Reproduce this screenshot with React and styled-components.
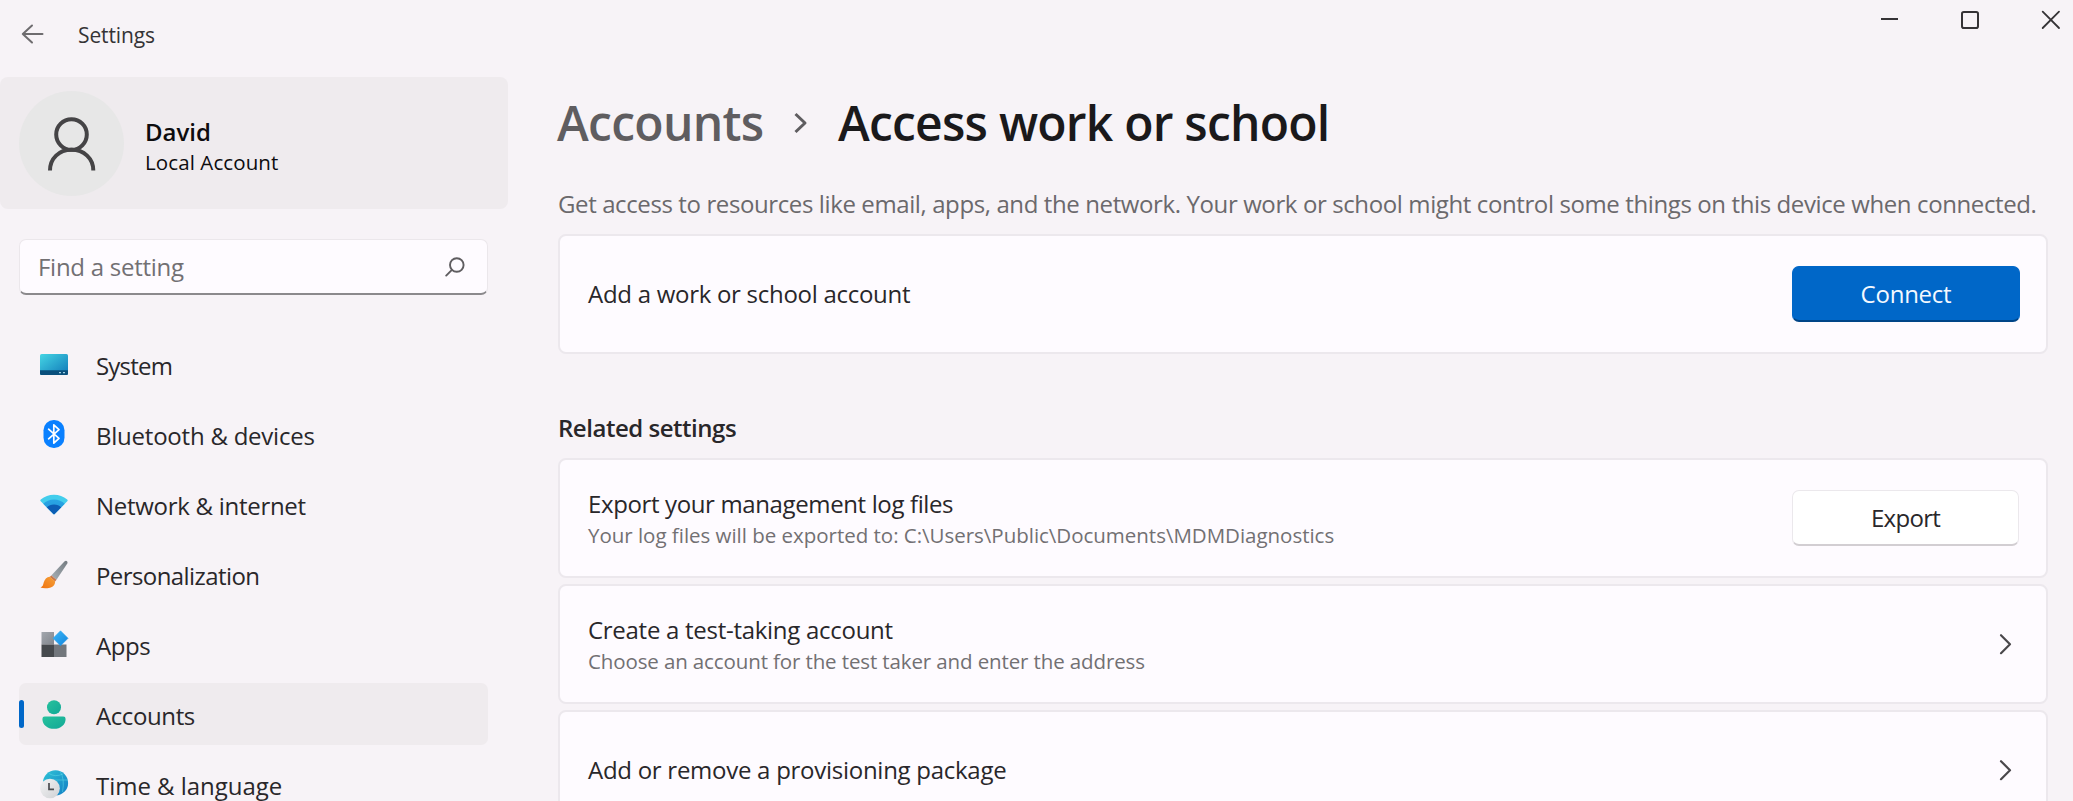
import React from "react";
import styled, { createGlobalStyle } from "styled-components";

const GlobalStyle = createGlobalStyle`
  *, *::before, *::after { box-sizing: border-box; }
  html, body { margin: 0; padding: 0; }
  body {
    background: #f7f3f7;
    color: #29272a;
    font-family: "Open Sans", "Noto Sans", sans-serif;
    font-size: 24px;
    line-height: 32px;
    overflow: hidden;
  }
  button, input { font: inherit; color: inherit; }
`;

const Window = styled.div`
  display: grid;
  grid-template-columns: 508px 1fr;
  height: 801px;
  overflow: hidden;
`;

const Label = styled.span`
  display: block;
  white-space: nowrap;
  letter-spacing: ${(p) => p.$track || 0}px;
`;

const Sidebar = styled.aside`
  display: flex;
  flex-direction: column;
`;

const TitleBar = styled.header`
  display: flex;
  align-items: center;
  gap: 34px;
  height: 77px;
  padding: 0 0 7px 21px;
  font-size: 21px;
  color: #353336;
`;

const BackButton = styled.button`
  display: flex;
  padding: 0 0 2px;
  border: 0;
  background: none;
`;

const Profile = styled.section`
  display: flex;
  align-items: center;
  gap: 21px;
  height: 132px;
  padding-left: 19px;
  padding-top: 1px;
  border-radius: 8px;
  background: #efebee;
`;

const Avatar = styled.div`
  display: flex;
  width: 105px;
  height: 105px;
  border-radius: 50%;
  background: #e7e7e7;
`;

const ProfileText = styled.div`
  color: #0d0c0e;
  padding-top: 6px;
`;

const ProfileName = styled(Label)`
  font-weight: 600;
`;

const ProfileKind = styled(Label)`
  font-size: 20.5px;
  line-height: 29px;
`;

const SearchBox = styled.div`
  display: flex;
  align-items: center;
  justify-content: space-between;
  height: 56px;
  margin: 30px 20px 0 19px;
  padding: 1px 22px 0 18px;
  border: 1px solid #ebe7eb;
  border-bottom: 2px solid #8b898c;
  border-radius: 7px;
  background: #fefbff;
  color: #727073;
`;

const Nav = styled.nav`
  display: flex;
  flex-direction: column;
  gap: 8px;
  margin: 38px 20px 0 19px;
`;

const NavItem = styled.a`
  display: flex;
  align-items: center;
  gap: 28px;
  flex: none;
  position: relative;
  height: 62px;
  padding-left: 21px;
  border-radius: 7px;
  background: ${(p) => (p.$active ? "#efebee" : "transparent")};

  &::before {
    content: "";
    position: absolute;
    left: 0;
    top: 17px;
    width: 5px;
    height: 28px;
    border-radius: 3px;
    background: ${(p) => (p.$active ? "#0067c8" : "transparent")};
  }
`;

const NavLabel = styled(Label)`
  padding-top: 3px;
`;

const NavIcon = styled.svg`
  flex: none;
  width: 28px;
  height: 28px;
  overflow: visible;
`;

const Main = styled.main`
  display: flex;
  flex-direction: column;
  padding: 0 25px 0 50px;
`;

const CaptionBar = styled.div`
  display: flex;
  justify-content: flex-end;
  gap: 61px;
  height: 40px;
  margin-right: -13px;
  padding-top: 10px;
`;

const CaptionButton = styled.button`
  display: flex;
  width: 20px;
  height: 20px;
  padding: 0;
  border: 0;
  background: none;
`;

const Breadcrumb = styled.h1`
  display: flex;
  align-items: center;
  margin: 53px 0 0 -1px;
  font-size: 48px;
  font-weight: 600;
  line-height: 60px;
  color: #1a191b;
`;

const ParentPage = styled(Label)`
  width: 236px;
  color: #5f5d60;
`;

const CurrentPage = styled(Label)`
  margin-left: 29px;
`;

const Intro = styled(Label)`
  margin-top: 35px;
  color: #6b696c;
`;

const SectionTitle = styled.h2`
  margin: 58px 0 0;
  font-size: 24px;
  font-weight: 600;
  line-height: 32px;
`;

const CardList = styled.div`
  display: flex;
  flex-direction: column;
  gap: 6px;
  margin-top: ${(p) => p.$top}px;
`;

const Card = styled.section`
  display: flex;
  align-items: center;
  justify-content: space-between;
  flex: none;
  height: 120px;
  padding: 0 ${(p) => p.$inset || 27}px 0 28px;
  border: 2px solid #ece8ed;
  border-radius: 8px;
  background: #fefbff;
`;

const CardNote = styled(Label)`
  margin-top: 1px;
  font-size: 20.5px;
  line-height: 28px;
  color: #727073;
`;

const CardText = styled.div`
  padding-top: 1px;
`;

const Button = styled.button`
  display: flex;
  align-items: center;
  justify-content: center;
  width: ${(p) => (p.$primary ? 228 : 227)}px;
  height: 56px;
  padding: 1px 0 0;
  border-radius: 7px;
  border: 1px solid ${(p) => (p.$primary ? "#0067c8" : "#ebe8ec")};
  border-bottom: 2px solid ${(p) => (p.$primary ? "#004587" : "#d2ced2")};
  background: ${(p) => (p.$primary ? "#0067c8" : "#ffffff")};
  color: ${(p) => (p.$primary ? "#f4f9ff" : "#29272a")};
`;

const RowChevron = styled.svg`
  width: 14px;
  height: 22px;
  margin-right: 6px;
`;

const CrumbChevron = styled.svg`
  width: 16px;
  height: 22px;
`;

function SystemIcon() {
  return (
    <NavIcon viewBox="0 0 28 28">
      <defs>
        <linearGradient id="sys" x1="0" y1="0" x2="1" y2="1">
          <stop offset="0" stopColor="#45d5e4" />
          <stop offset="1" stopColor="#0f78b8" />
        </linearGradient>
      </defs>
      <rect x="0" y="4" width="28" height="21" rx="1.6" fill="url(#sys)" />
      <path d="M0 20.2h28v3.2a1.6 1.6 0 0 1-1.6 1.6H1.6A1.6 1.6 0 0 1 0 23.4z" fill="#0a4f7c" />
      <path d="M19 22.6h2M23 22.6h2" stroke="#9cd0e4" strokeWidth="1.4" />
    </NavIcon>
  );
}

function BluetoothIcon() {
  return (
    <NavIcon viewBox="0 0 28 28">
      <rect x="3.5" y="0" width="21" height="28" rx="10.2" fill="#0a80ff" />
      <path d="M8.6 9.2 19 18.4 13.8 23.2V4.8L19 9.6 8.6 18.8" fill="none" stroke="#fff" strokeWidth="1.7" strokeLinejoin="round" strokeLinecap="round" />
    </NavIcon>
  );
}

function NetworkIcon() {
  return (
    <NavIcon viewBox="0 0 28 28">
      <defs>
        <clipPath id="fan">
          <path d="M0.5 11 Q0 10.3 0.8 9.6 A20 20 0 0 1 27.2 9.6 Q28 10.3 27.5 11 L14.6 24 Q14 24.6 13.4 24 Z" />
        </clipPath>
        <linearGradient id="band" x1="0" y1="0" x2="0" y2="1">
          <stop offset="0" stopColor="#2aa6e4" />
          <stop offset="1" stopColor="#157fd0" />
        </linearGradient>
      </defs>
      <g clipPath="url(#fan)">
        <rect width="28" height="28" fill="#43cdec" />
        <circle cx="14" cy="25" r="15.6" fill="url(#band)" />
        <circle cx="14" cy="25" r="10.6" fill="#0c5db4" />
      </g>
    </NavIcon>
  );
}

function BrushIcon() {
  return (
    <NavIcon viewBox="0 0 28 28">
      <defs>
        <linearGradient id="handle" x1="1" y1="0" x2="0" y2="1">
          <stop offset="0" stopColor="#737a80" />
          <stop offset="1" stopColor="#a9b1b8" />
        </linearGradient>
        <linearGradient id="bristle" x1="1" y1="0" x2="0" y2="1">
          <stop offset="0" stopColor="#f5a13a" />
          <stop offset="1" stopColor="#f0720f" />
        </linearGradient>
      </defs>
      <path d="M27 1.2q1 .9.3 2.3L16.5 19.8l-5.200-4.400L24.400 1.600q1.400-1.300 2.600-.4z" fill="url(#handle)" />
      <path d="M11.300 15.400l5.200 4.400-1.400 1.700-5.400-4.400z" fill="#c9774a" />
      <path d="M9.800 16.700l5.200 4.500c.4 2.800-1.400 5.600-5 6.500-3.400.8-6.800.9-9.500-.2 2.600-1.100 2.600-2.600 3.200-4.900.8-3.200 3-5.600 6.100-5.900z" fill="url(#bristle)" />
    </NavIcon>
  );
}

function AppsIcon() {
  return (
    <NavIcon viewBox="0 0 28 28">
      <defs>
        <linearGradient id="tile" x1="0" y1="0" x2="1" y2="1">
          <stop offset="0" stopColor="#a3a7ae" />
          <stop offset="1" stopColor="#82868d" />
        </linearGradient>
        <linearGradient id="gem" x1="0" y1="0" x2="1" y2="1">
          <stop offset="0" stopColor="#3cb6f8" />
          <stop offset="1" stopColor="#1285dc" />
        </linearGradient>
      </defs>
      <rect x="1.5" y="2" width="12.5" height="12.5" fill="url(#tile)" />
      <rect x="1.5" y="14.5" width="12.5" height="12.5" fill="#46494d" />
      <rect x="14" y="14.5" width="12.5" height="12.5" fill="#72767c" />
      <path d="M20.5 .8 28 8.3 20.500 15.800 13 8.300z" fill="url(#gem)" stroke="url(#gem)" strokeWidth=".6" strokeLinejoin="round" />
    </NavIcon>
  );
}

function AccountsIcon() {
  return (
    <NavIcon viewBox="0 0 28 28">
      <defs>
        <linearGradient id="acct" x1="0" y1="0" x2="1" y2="1">
          <stop offset="0" stopColor="#27c29d" />
          <stop offset="1" stopColor="#12a896" />
        </linearGradient>
      </defs>
      <circle cx="14" cy="7.2" r="7" fill="url(#acct)" />
      <path d="M4.7 16.6h18.600a2.300 2.300 0 0 1 2.300 2.300c0 5.800-5 9.900-11.600 9.900S2.400 24.700 2.400 18.900a2.300 2.300 0 0 1 2.300-2.300z" fill="url(#acct)" />
    </NavIcon>
  );
}

function TimeIcon() {
  return (
    <NavIcon viewBox="0 0 28 28">
      <defs>
        <linearGradient id="globe" x1="0" y1="0" x2="1" y2="1">
          <stop offset="0" stopColor="#2fc3d6" />
          <stop offset="1" stopColor="#127cc4" />
        </linearGradient>
        <linearGradient id="dial" x1="0" y1="0" x2="1" y2="1">
          <stop offset="0" stopColor="#f4f4f5" />
          <stop offset="1" stopColor="#cfd1d4" />
        </linearGradient>
      </defs>
      <circle cx="15.5" cy="12.9" r="12.6" fill="url(#globe)" />
      <path d="M9 3.500Q15 7.500 23 4M20 1Q25 9 22.500 22M3.500 10H28" fill="none" stroke="#5fdcea" strokeWidth="1" opacity=".5" />
      <circle cx="10" cy="18.500" r="9.800" fill="url(#dial)" />
      <path d="M9 13v6.400h5" fill="none" stroke="#4b4d50" strokeWidth="1.700" />
    </NavIcon>
  );
}

const NAV = [
  { label: "System", track: -0.8, Icon: SystemIcon },
  { label: "Bluetooth & devices", track: -0.23, Icon: BluetoothIcon },
  { label: "Network & internet", track: -0.28, Icon: NetworkIcon },
  { label: "Personalization", track: -0.58, Icon: BrushIcon },
  { label: "Apps", track: -0.4, Icon: AppsIcon },
  { label: "Accounts", track: -0.4, Icon: AccountsIcon, active: true },
  { label: "Time & language", track: -0.03, Icon: TimeIcon },
];

function Chevron() {
  return (
    <RowChevron viewBox="0 0 14 22" fill="none" stroke="#4a484b" strokeWidth="2.2">
      <path d="M2 2.200 11 11.200 2 20.200" strokeLinejoin="round" strokeLinecap="round" />
    </RowChevron>
  );
}

export default function App() {
  return (
    <>
      <GlobalStyle />
      <Window>
        <Sidebar>
          <TitleBar>
            <BackButton aria-label="Back">
              <svg width="23" height="20" viewBox="0 0 23 20" fill="none" stroke="#6e6c6f" strokeWidth="2" strokeLinecap="round" strokeLinejoin="round">
                <path d="M21.500 10H1.800M11 1.500 1.800 10 11 18.500" />
              </svg>
            </BackButton>
            <Label $track={-0.13}>Settings</Label>
          </TitleBar>

          <Profile>
            <Avatar>
              <svg width="105" height="105" viewBox="0 0 105 105" fill="none" stroke="#454446" strokeWidth="4">
                <circle cx="52.500" cy="43.500" r="15.300" />
                <path d="M31 79.500C31 67.500 40 58.800 52.500 58.800S74.300 67.500 74.300 79.500" />
              </svg>
            </Avatar>
            <ProfileText>
              <ProfileName>David</ProfileName>
              <ProfileKind $track={0.1}>Local Account</ProfileKind>
            </ProfileText>
          </Profile>

          <SearchBox>
            <Label $track={-0.27}>Find a setting</Label>
            <svg width="20" height="20" viewBox="0 0 20 20" fill="none" stroke="#5f5d60" strokeWidth="1.900" strokeLinecap="round">
              <circle cx="11.800" cy="8" r="6.800" />
              <path d="M6.900 12.900 1.200 18.600" />
            </svg>
          </SearchBox>

          <Nav>
            {NAV.map(({ label, track, Icon, active }) => (
              <NavItem key={label} $active={active}>
                <Icon />
                <NavLabel $track={track}>{label}</NavLabel>
              </NavItem>
            ))}
          </Nav>
        </Sidebar>

        <Main>
          <CaptionBar>
            <CaptionButton aria-label="Minimize">
              <svg width="20" height="20" viewBox="0 0 20 20" stroke="#353336" strokeWidth="2">
                <path d="M2 9h17" />
              </svg>
            </CaptionButton>
            <CaptionButton aria-label="Maximize">
              <svg width="20" height="20" viewBox="0 0 20 20" fill="none" stroke="#353336" strokeWidth="2">
                <rect x="2" y="2" width="16" height="16" rx="1.800" />
              </svg>
            </CaptionButton>
            <CaptionButton aria-label="Close">
              <svg width="20" height="20" viewBox="0 0 20 20" stroke="#353336" strokeWidth="1.800" strokeLinecap="round">
                <path d="M1.700 1.700 18 18M18 1.700 1.700 18" />
              </svg>
            </CaptionButton>
          </CaptionBar>

          <Breadcrumb>
            <ParentPage $track={-0.7}>Accounts</ParentPage>
            <CrumbChevron viewBox="0 0 16 22" fill="none" stroke="#5f5d60" strokeWidth="3">
              <path d="M2.500 2 12 11 2.500 20" strokeLinejoin="round" />
            </CrumbChevron>
            <CurrentPage $track={-0.77}>Access work or school</CurrentPage>
          </Breadcrumb>

          <Intro $track={-0.39}>
            Get access to resources like email, apps, and the network. Your work or school might control some things on this device when connected.
          </Intro>

          <CardList $top={14}>
            <Card $inset={26}>
              <Label $track={-0.28}>Add a work or school account</Label>
              <Button $primary>
                <Label $track={-0.25}>Connect</Label>
              </Button>
            </Card>
          </CardList>

          <SectionTitle>
            <Label $track={-0.47}>Related settings</Label>
          </SectionTitle>

          <CardList $top={14}>
            <Card>
              <CardText>
                <Label $track={-0.37}>Export your management log files</Label>
                <CardNote $track={-0.02}>Your log files will be exported to: C:\Users\Public\Documents\MDMDiagnostics</CardNote>
              </CardText>
              <Button>
                <Label $track={-0.7}>Export</Label>
              </Button>
            </Card>
            <Card>
              <CardText>
                <Label $track={-0.28}>Create a test-taking account</Label>
                <CardNote $track={-0.12}>Choose an account for the test taker and enter the address</CardNote>
              </CardText>
              <Chevron />
            </Card>
            <Card>
              <Label $track={-0.27}>Add or remove a provisioning package</Label>
              <Chevron />
            </Card>
          </CardList>
        </Main>
      </Window>
    </>
  );
}
